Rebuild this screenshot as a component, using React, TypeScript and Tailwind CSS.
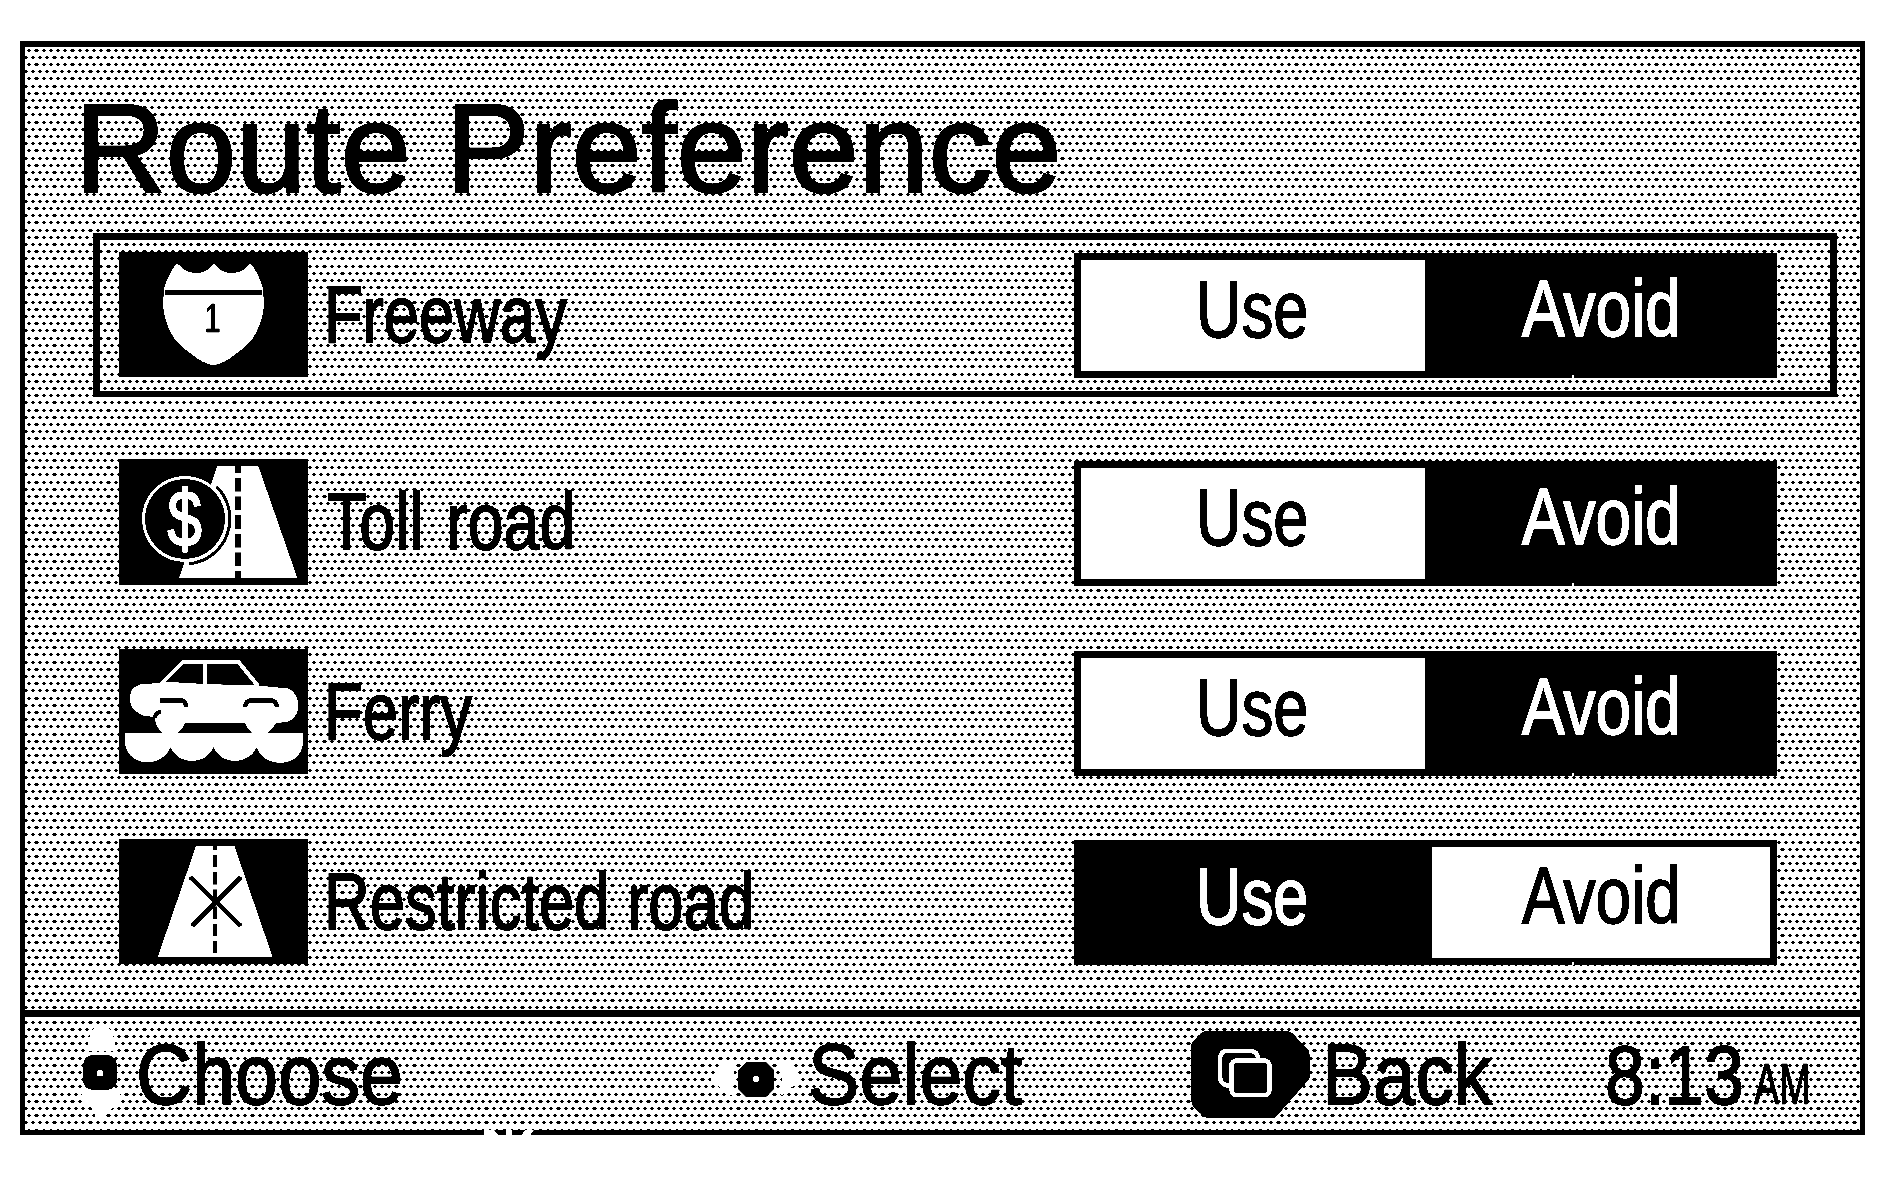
import React from 'react'
import clsx from 'clsx'

type Choice = 'use' | 'avoid'

const FreewayIcon = () => (
    <svg width="189" height="125" viewBox="0 0 189 125" className="block bg-black">
        <path
            fill="#fff"
            d="M57.5 12C60 12 61 14 64 17C72 22.500 84 22.500 91 16C93 13 94 12 95 12C96 12 97 13 99 16C106 22.500 118 22.500 126 17C129 14 130 12 132 12C135 15 142 28 143.700 36L145 50C145 62 141 75 134 86C126 96 118 101 110 107C104 110.500 98 113 94.500 113C91 113 85 110.500 79 107C71 101 63 96 55 86C48 75 44 62 44 50L45.300 36C47 28 54 15 57.500 12Z"
        />
        <rect x="46" y="38" width="97" height="5" />
        <text transform="translate(85.5 80) scale(.72 1)" fontSize="40" stroke="#000" strokeWidth="1">1</text>
    </svg>
)

const TollIcon = () => (
    <svg width="189" height="126" viewBox="0 0 189 126" className="block bg-black">
        <path fill="#fff" d="M98.300 7H139.300L178.300 119H60Z" />
        <path stroke="#000" strokeWidth="6" strokeDasharray="13.7 5" strokeDashoffset="7" d="M119 7V119" />
        <circle cx="66" cy="60" r="41.500" stroke="#fff" strokeWidth="3" />
        <path d="M97.500 27.500A45.500 45.500 0 0 1 70 105" fill="none" stroke="#000" strokeWidth="3" />
        <text transform="translate(48.5 86.5) scale(.78 1)" fontSize="79" fill="#fff" stroke="#fff" strokeWidth="2">$</text>
    </svg>
)

const FerryIcon = () => (
    <svg width="189" height="125" viewBox="0 0 189 125" className="block bg-black">
        <path fill="none" stroke="#fff" strokeWidth="4" d="M42 35L64 13H119.500L139 37M86 13V36" />
        <path
            fill="#fff"
            d="M21 35.500L51 33L86 35L141 36.700L169 39.500C174 41 178 47 179 53V60C178 66 174 71 168 73L157 74C155 78 152 81 149 84H133C130 81 127 78 126 74H66C65 78 62 81 59 84H44C40 81 36 76 36 68L26 67C20 65 14 61 12 56C10 51 11 42 14 39Z"
        />
        <path fill="none" stroke="#000" strokeWidth="4.500" d="M41 51.500H63Q66.500 52 67 58M126 58Q127 52 131 51.500H153Q157 52 158 58" />
        <path fill="none" stroke="#000" strokeWidth="4" d="M36 69Q36.500 63.500 42 62.500" />
        <path fill="#fff" d="M6 84H184V92C184 120 144 120 137.700 98C130 116.500 102 116.500 94.500 98C87 116.500 59 116.500 51.500 98C44 120 6 118 6 92Z" />
    </svg>
)

const RestrictedIcon = () => (
    <svg width="189" height="125" viewBox="0 0 189 125" className="block bg-black">
        <path fill="#fff" d="M77 7H115.400L153.600 118H38.700Z" />
        <path stroke="#000" strokeWidth="4" strokeDasharray="12.200 5" strokeDashoffset="8.200" d="M96 7V114" />
        <path stroke="#000" strokeWidth="4.500" d="M71 38L122 87M122 38L73 87" />
    </svg>
)

// tiled screen tone behind the whole display
const Dots = () => (
    <svg className="absolute inset-0 -z-10 h-full w-full" shapeRendering="crispEdges">
        <defs>
            <pattern id="tone" x="-1" y="2" width="36" height="72" patternUnits="userSpaceOnUse">
                {Array(10).fill('').map((_, row) => {
                    const starts = row % 2 ? [0, 7, 14, 21, 28] : [3, 10, 18, 25, 32]
                    const wide = row % 2 ? 4 : 1
                    const y = row * 7 + (row > 4 ? 1 : 0)
                    return starts.map((x, i) => {
                        const w = i === wide ? 5 : 4
                        return (
                            <path key={`${row}-${i}`} d={`M${x + 1} ${y}h${w - 2}v1h1v1h-1v1h-${w - 2}v-1h-1v-1h1z`} />
                        )
                    })
                })}
            </pattern>
        </defs>
        <rect width="100%" height="100%" fill="url(#tone)" />
    </svg>
)

const rows: { label: string, icon: React.ReactNode, value: Choice, active?: boolean, row: string, toggle: string, text: string }[] = [
    { label: 'Freeway', icon: <FreewayIcon />, value: 'avoid', active: true, row: '', toggle: 'mt-[13px]', text: 'ml-[16px] scale-x-[.792]' },
    { label: 'Toll road', icon: <TollIcon />, value: 'avoid', row: 'mt-[43px]', toggle: 'mt-[14px]', text: 'ml-[19px] scale-x-[.805] [word-spacing:6px]' },
    { label: 'Ferry', icon: <FerryIcon />, value: 'avoid', row: 'mt-[26px]', toggle: 'mt-[14px]', text: 'ml-[16px] scale-x-[.792]' },
    { label: 'Restricted road', icon: <RestrictedIcon />, value: 'use', row: 'mt-[26px]', toggle: 'mt-[13px]', text: 'ml-[16px] scale-x-[.793]' },
]

const Toggle = ({ value, className }: { value: Choice, className?: string }) => (
    <div className={clsx('relative ml-auto mr-[53px] flex h-[125px] w-[703px] shrink-0 border-[7px] border-black text-[80px] leading-none [-webkit-text-stroke:1.6px]', className)}>
        <div className={clsx('pl-[115px] pt-[10px]', value === 'use' ? 'w-[351px] bg-black text-white' : 'w-[344px] bg-white')}>
            <span className="inline-block origin-left scale-x-[.79]">Use</span>
        </div>
        <div className={clsx('flex-1 pt-[9px]', value === 'avoid' ? 'bg-black pl-[97px] text-white' : 'bg-white pl-[90px]')}>
            <span className="inline-block origin-left scale-x-[.8]">Avoid</span>
        </div>
        <i className="absolute -bottom-[7px] left-[491px] h-[3px] w-[2px] bg-white" />
    </div>
)

const App = () => {
    return (
        <main className="h-[1191px] w-[1887px] overflow-hidden bg-white pl-5 pt-[41px] font-['Liberation_Sans',Arial,sans-serif] text-black contrast-[20] grayscale">
            <section className="relative isolate flex h-[1094px] w-[1845px] flex-col whitespace-nowrap border-x-[5px] border-b-[5px] border-t-[6px] border-black">
                <Dots />

                <h1 className="ml-[50px] mt-[39px] h-[147px] origin-left scale-x-[1.003] text-[125.5px] leading-none [-webkit-text-stroke:2.5px]">Route Preference</h1>

                {rows.map((item) => (
                    <div
                        key={item.label}
                        className={clsx('ml-[68px] flex h-[164px] w-[1744px] shrink-0 items-start border-x-[7px] border-b-[6px] border-t-[7px]', item.active ? 'border-black' : 'border-transparent', item.row)}
                    >
                        <div className="ml-[19px] mt-[12px]">{item.icon}</div>
                        <div className={clsx('mt-[35px] origin-left text-[80px] leading-none [-webkit-text-stroke:1.8px]', item.text)}>{item.label}</div>
                        <Toggle value={item.value} className={item.toggle} />
                    </div>
                ))}

                <footer className="mt-[26px] flex h-[120px] shrink-0 items-start border-t-[7px] border-black text-[85px] leading-none [-webkit-text-stroke:1.7px]">
                    <svg width="42" height="92" viewBox="80 1026 42 92" className="ml-[55px] mt-[9px] shrink-0">
                        <path fill="#fff" d="M94 1028H109L115 1040V1051H88V1040ZM82 1092H120V1100L111 1110L104 1117H96L92 1108L82 1103Z" />
                        <rect x="83" y="1055" width="34" height="35" rx="10" />
                        <rect x="97" y="1070" width="6" height="6" rx="1.500" fill="#fff" />
                    </svg>
                    <div className="ml-[14px] mt-[15px] w-[269px]"><span className="inline-block origin-left scale-x-[.912]">Choose</span></div>

                    <svg width="94" height="44" viewBox="708 1056 94 44" className="ml-[303px] mt-[39px] shrink-0">
                        <path fill="#fff" d="M726 1061H736L734 1070L733 1095H729L711 1080L718 1070ZM779 1062H788L798 1072L800 1080L792 1087L782 1095L778 1092L782 1080Z" />
                        <path d="M747 1062H766L774 1070V1089L766 1097H746L738 1089V1070Z" />
                        <rect x="753" y="1076" width="6" height="6" rx="2" fill="#fff" />
                    </svg>
                    <div className="ml-[6px] mt-[15px] w-[219px]"><span className="inline-block origin-left scale-x-[.907]">Select</span></div>

                    <svg width="120" height="87" viewBox="1191 1031 120 87" className="ml-[164px] mt-[14px] shrink-0">
                        <path d="M1207 1031H1288Q1292 1032 1296 1037L1306 1047Q1310 1052 1310 1059V1077L1305 1084L1275 1118H1207Q1203 1117 1200 1113L1194 1108Q1191 1104 1191 1098V1047Q1191 1043 1195 1039L1201 1033Q1204 1031 1207 1031Z" />
                        <path fill="none" stroke="#fff" strokeWidth="4.500" d="M1230 1086Q1220 1085 1220 1077V1058Q1221 1051 1227 1051H1252Q1258 1052 1258.500 1060" />
                        <rect x="1231.500" y="1060.500" width="38" height="34.500" rx="5" stroke="#fff" strokeWidth="4.500" />
                    </svg>
                    <div className="ml-[11px] mt-[15px] w-[179px]"><span className="inline-block origin-left scale-x-[.9]">Back</span></div>

                    <div className="ml-[104px] mt-[17px] w-[145px] text-[83px]"><span className="inline-block origin-left scale-x-[.86]">8:13</span></div>
                    <div className="ml-[4px] mt-[38px] w-[60px] text-[58px] [-webkit-text-stroke:1.2px]"><span className="inline-block origin-left scale-x-[.65]">AM</span></div>
                </footer>

                {/* worn spot on the lower frame */}
                <svg width="52" height="7" viewBox="0 0 52 7" className="absolute -bottom-[6px] left-[459px]">
                    <path fill="#fff" d="M0 1H10L15 6L22 7V1H28V6L37 7L41 1H50L47 4V7H0Z" />
                </svg>
            </section>
        </main>
    )
}

export default App
